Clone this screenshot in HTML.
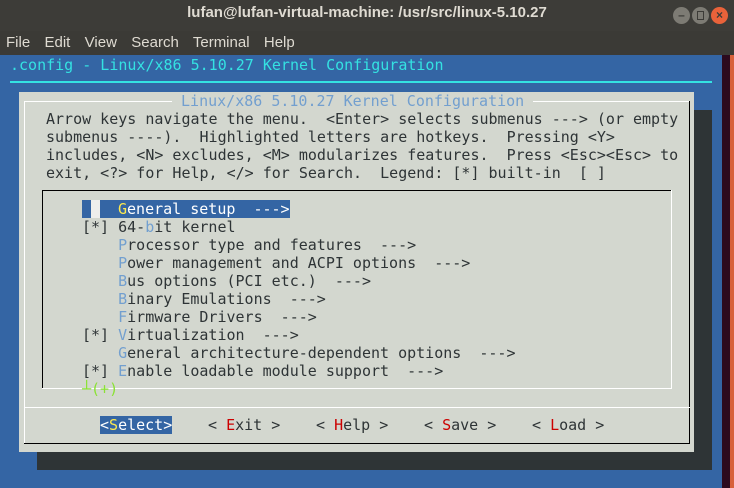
<!DOCTYPE html>
<html><head><meta charset="utf-8"><style>
*{margin:0;padding:0;box-sizing:border-box}
body{width:734px;height:488px;overflow:hidden;background:#3465a4;position:relative;font-family:"DejaVu Sans Mono","Liberation Mono",monospace;font-size:15px}
.a{position:absolute}
.t{position:absolute;white-space:pre;line-height:18px;height:18px;color:#2e3436}
.h{color:#729fcf}
.r{color:#cc0000}
.y{color:#fce94f}
</style></head><body>
<div class="a" style="left:0;top:0;width:734px;height:31px;background:#3d3c38"></div>
<div class="a" style="left:0;top:4px;width:734px;text-align:center;font-family:'Liberation Sans',sans-serif;font-size:15px;color:#dfdbd2;font-weight:bold">lufan@lufan-virtual-machine: /usr/src/linux-5.10.27</div>
<div class="a" style="left:673px;top:7px;width:17px;height:17px;border-radius:50%;background:#7d7b74;color:#3c3b37;font:bold 12px 'Liberation Sans';text-align:center;line-height:17px">–</div>
<div class="a" style="left:692px;top:7px;width:17px;height:17px;border-radius:50%;background:#7d7b74"><div class="a" style="left:5px;top:4px;width:7px;height:9px;border:1px solid #3c3b37"></div></div>
<div class="a" style="left:711px;top:7px;width:17px;height:17px;border-radius:50%;background:#e9623a;color:#3c3b37;font:bold 12px 'Liberation Sans';text-align:center;line-height:17px">×</div>
<div class="a" style="left:0;top:31px;width:734px;height:24px;background:#3b3a36"></div>
<div class="a" style="left:6px;top:34px;font-family:'Liberation Sans',sans-serif;font-size:15px;color:#dfdbd2;white-space:pre;word-spacing:3px">File  Edit  View  Search  Terminal  Help</div>
<div class="a" style="left:722px;top:55px;width:8px;height:433px;background:#2c0a1e"></div>
<div class="a" style="left:730px;top:55px;width:4px;height:433px;background:#d8603a"></div>
<div class="t" style="left:10px;top:56px;color:#34e2e2">.config - Linux/x86 5.10.27 Kernel Configuration</div>
<div class="a" style="left:10px;top:81px;width:702px;height:2px;background:#34e2e2"></div>
<div class="a" style="left:37px;top:110px;width:675px;height:360px;background:#2e3436"></div>
<div class="a" style="left:19px;top:92px;width:675px;height:360px;background:#d3d7cf"></div>
<div class="a" style="left:24px;top:101px;width:666px;height:1px;background:#fff"></div>
<div class="a" style="left:24px;top:101px;width:1px;height:342px;background:#fff"></div>
<div class="a" style="left:689px;top:101px;width:1px;height:342px;background:#000"></div>
<div class="a" style="left:24px;top:443px;width:666px;height:1px;background:#000"></div>
<div class="a" style="left:24px;top:407px;width:666px;height:1px;background:#fff"></div>
<div class="t" style="left:172px;top:92px;color:#729fcf;background:#d3d7cf"> Linux/x86 5.10.27 Kernel Configuration </div>
<div class="t" style="left:46px;top:110px">Arrow keys navigate the menu.  &lt;Enter&gt; selects submenus ---&gt; (or empty</div>
<div class="t" style="left:46px;top:128px">submenus ----).  Highlighted letters are hotkeys.  Pressing &lt;Y&gt;</div>
<div class="t" style="left:46px;top:146px">includes, &lt;N&gt; excludes, &lt;M&gt; modularizes features.  Press &lt;Esc&gt;&lt;Esc&gt; to</div>
<div class="t" style="left:46px;top:164px">exit, &lt;?&gt; for Help, &lt;/&gt; for Search.  Legend: [*] built-in  [ ]</div>
<div class="a" style="left:42px;top:190px;width:630px;height:1px;background:#000"></div>
<div class="a" style="left:42px;top:190px;width:1px;height:198px;background:#000"></div>
<div class="a" style="left:671px;top:190px;width:1px;height:198px;background:#fff"></div>
<div class="a" style="left:42px;top:388px;width:630px;height:1px;background:#fff"></div>
<div class="a" style="left:82px;top:200px;width:208px;height:18px;background:#3465a4"></div>
<div class="a" style="left:91px;top:200px;width:9px;height:18px;background:#eeeeec"></div>
<div class="t" style="left:118px;top:200px;color:#fff"><span class="y">G</span>eneral setup  ---&gt;</div>
<div class="t" style="left:82px;top:218px">[*] 64-<span class="h">b</span>it kernel</div>
<div class="t" style="left:82px;top:236px">    <span class="h">P</span>rocessor type and features  ---&gt;</div>
<div class="t" style="left:82px;top:254px">    <span class="h">P</span>ower management and ACPI options  ---&gt;</div>
<div class="t" style="left:82px;top:272px">    <span class="h">B</span>us options (PCI etc.)  ---&gt;</div>
<div class="t" style="left:82px;top:290px">    <span class="h">B</span>inary Emulations  ---&gt;</div>
<div class="t" style="left:82px;top:308px">    <span class="h">F</span>irmware Drivers  ---&gt;</div>
<div class="t" style="left:82px;top:326px">[*] <span class="h">V</span>irtualization  ---&gt;</div>
<div class="t" style="left:82px;top:344px">    <span class="h">G</span>eneral architecture-dependent options  ---&gt;</div>
<div class="t" style="left:82px;top:362px">[*] <span class="h">E</span>nable loadable module support  ---&gt;</div>
<div class="t" style="left:82px;top:380px;color:#8ae234">┴(+)</div>
<div class="a" style="left:100px;top:416px;width:72px;height:18px;background:#3465a4"></div>
<div class="t" style="left:100px;top:416px;color:#fff">&lt;<span class="y">S</span>elect&gt;</div>
<div class="t" style="left:208px;top:416px">&lt; <span class="r">E</span>xit &gt;</div>
<div class="t" style="left:316px;top:416px">&lt; <span class="r">H</span>elp &gt;</div>
<div class="t" style="left:424px;top:416px">&lt; <span class="r">S</span>ave &gt;</div>
<div class="t" style="left:532px;top:416px">&lt; <span class="r">L</span>oad &gt;</div>
</body></html>
